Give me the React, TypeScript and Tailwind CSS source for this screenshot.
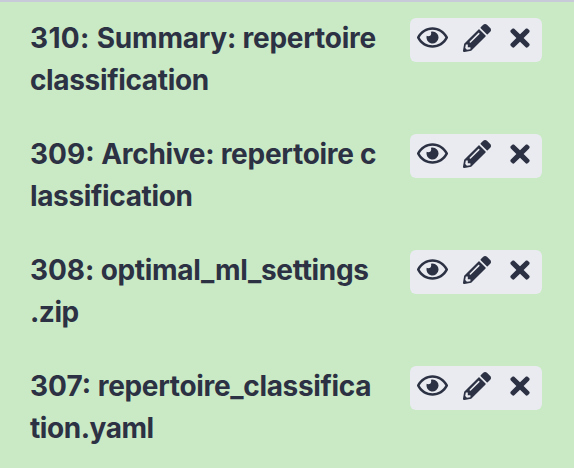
import { FaPencilAlt, FaTimes, FaRegEye } from "react-icons/fa";

const items = [
  { id: "310:", first: "Summary: repertoire", rest: "classification", idTrack: "tracking-[0.35px]", firstTrack: "tracking-[-0.23px]", restTrack: "tracking-[-0.35px]" },
  { id: "309:", first: "Archive: repertoire c", rest: "lassification", idTrack: "tracking-[0px]", firstTrack: "tracking-[-0.28px]", restTrack: "tracking-[-0.36px]" },
  { id: "308:", first: "optimal_ml_settings", rest: ".zip", idTrack: "tracking-[-0.1px]", firstTrack: "tracking-[-0.32px]", restTrack: "tracking-[-0.5px]" },
  { id: "307:", first: "repertoire_classifica", rest: "tion.yaml", idTrack: "tracking-[0px]", firstTrack: "tracking-[-0.33px]", restTrack: "tracking-[-0.45px]" },
];

export default function App() {
  return (
    <main className="h-[468px] w-[574px] overflow-hidden border-t-2 border-[#c8cada] bg-[#caeac5] pt-[15px] font-['Inter',sans-serif] text-[#2c3143]">
      {items.map((item) => (
        <section key={item.id} className="flex h-[116px] justify-between pr-8 pl-[30px]">
          <h2 className="text-[28px] leading-[42px] font-bold whitespace-nowrap">
            <span className="block">
              <span className={item.idTrack}>{item.id} </span>
              <span className={item.firstTrack}>{item.first}</span>
            </span>
            <span className={`block ${item.restTrack}`}>{item.rest}</span>
          </h2>
          <div className="mt-px flex h-11 w-[132px] rounded-md bg-[#e9ebf0] pb-[5px]">
            <button aria-label="View" className="flex w-11 items-center pl-[7px]"><FaRegEye size={31} className="shrink-0" /></button>
            <button aria-label="Edit" className="flex w-11 items-center pl-[9px]"><FaPencilAlt size={28} className="shrink-0" /></button>
            <button aria-label="Delete" className="flex w-11 items-center pl-[7.5px]"><FaTimes size={28} className="shrink-0" /></button>
          </div>
        </section>
      ))}
    </main>
  );
}
